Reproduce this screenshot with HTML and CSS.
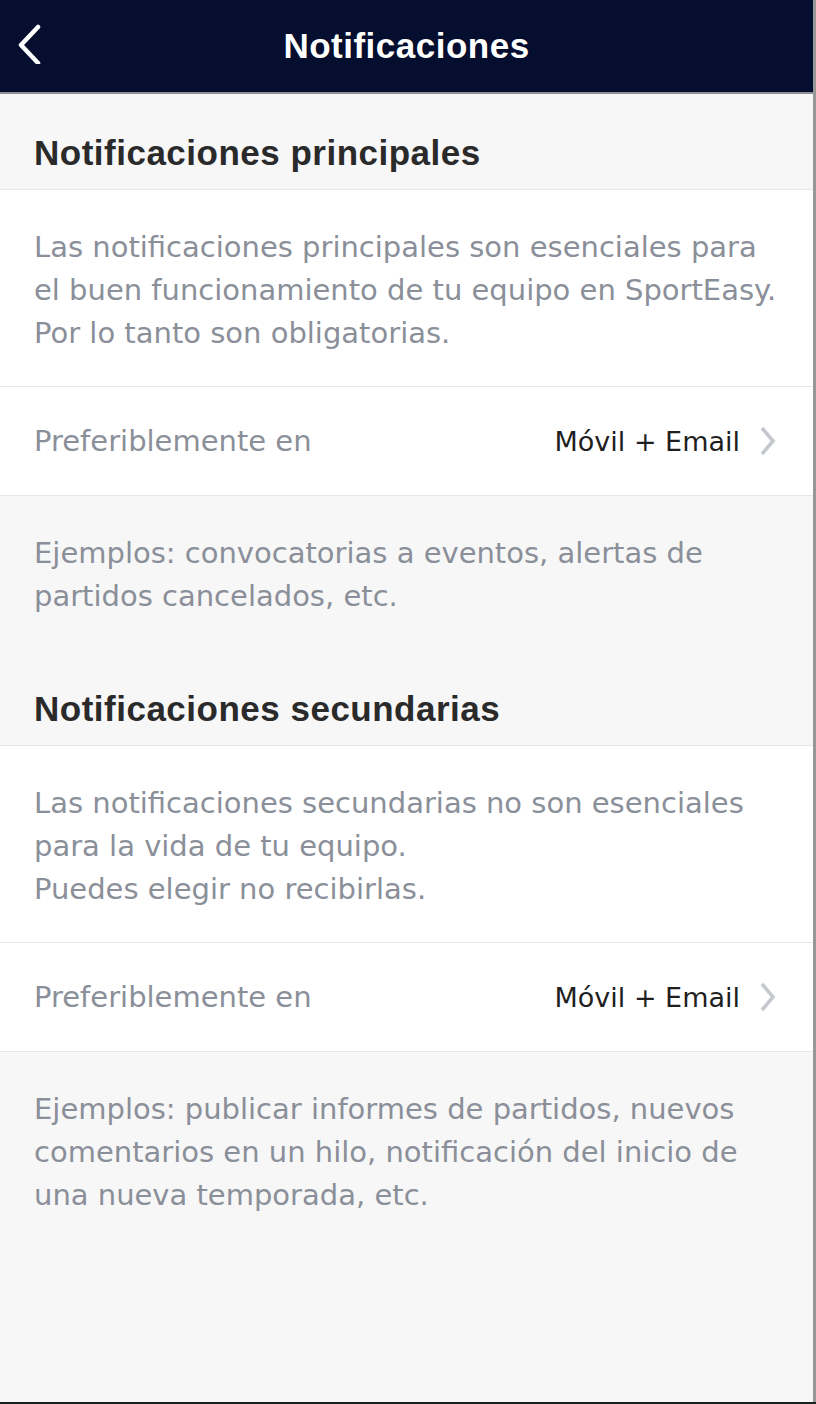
FILE: index.html
```html
<!DOCTYPE html>
<html>

<head>
  <title>Notificaciones</title>
  <link rel="stylesheet" href="styles.css">
</head>

<body>

  <div class="screen">
    <div class="topbar">
      <a class="back" href="#">
        <svg width="30" height="44" viewBox="0 0 30 44">
          <path d="M22 7 L5 25 L22 43" fill="none" stroke="#fff" stroke-width="4.5" stroke-linecap="round" stroke-linejoin="round"/>
        </svg>
      </a>
      <h1 class="title">Notificaciones</h1>
    </div>

    <h2 class="section-title">Notificaciones principales</h2>
    <p class="description">Las notificaciones principales son esenciales para<br>el buen funcionamiento de tu equipo en SportEasy.<br>Por lo tanto son obligatorias.</p>
    <div class="row">
      <span class="row-label">Preferiblemente en</span>
      <span class="row-value">Móvil + Email
        <svg class="chevron" width="16" height="30" viewBox="0 0 16 30">
          <path d="M2 2 L13 15 L2 28" fill="none" stroke="#c5c8ce" stroke-width="3.6"/>
        </svg>
      </span>
    </div>
    <p class="examples">Ejemplos: convocatorias a eventos, alertas de<br>partidos cancelados, etc.</p>

    <h2 class="section-title">Notificaciones secundarias</h2>
    <p class="description">Las notificaciones secundarias no son esenciales<br>para la vida de tu equipo.<br>Puedes elegir no recibirlas.</p>
    <div class="row">
      <span class="row-label">Preferiblemente en</span>
      <span class="row-value">Móvil + Email
        <svg class="chevron" width="16" height="30" viewBox="0 0 16 30">
          <path d="M2 2 L13 15 L2 28" fill="none" stroke="#c5c8ce" stroke-width="3.6"/>
        </svg>
      </span>
    </div>
    <p class="examples">Ejemplos: publicar informes de partidos, nuevos<br>comentarios en un hilo, notificación del inicio de<br>una nueva temporada, etc.</p>
  </div>
  <div class="floor"></div>

</body>

</html>
```

FILE: styles.css
```css
body {
  margin: 0;
  background-color: #979797;
}

.screen {
  width: 813px;
  height: 1402px;
  overflow: hidden;
  background-color: #f7f7f7;
  font-family: "DejaVu Sans", sans-serif;
}

.floor {
  height: 2px;
  background-color: #17211f;
}

.topbar {
  position: relative;
  height: 92px;
  background-color: #050e2e;
  border-bottom: 2px solid #8c8f96;
  display: flex;
  align-items: center;
  justify-content: center;
}

.back {
  position: absolute;
  left: 16px;
  top: 20px;
}

.title {
  margin: 0;
  color: white;
  font-family: "Liberation Sans", Arial, sans-serif;
  font-weight: bold;
  font-size: 35px;
  letter-spacing: 0.5px;
}

.section-title {
  margin: 0;
  padding: 37px 20px 15px 34px;
  font-family: "Liberation Sans", Arial, sans-serif;
  font-weight: bold;
  font-size: 35px;
  line-height: 43px;
  color: #2a2a2a;
  letter-spacing: 0.5px;
  border-bottom: 1px solid #e3e6ea;
}

.description {
  margin: 0;
  padding: 36px 10px 31px 34px;
  background-color: white;
  color: #8a8f99;
  font-size: 29px;
  line-height: 43px;
  white-space: nowrap;
  border-bottom: 1px solid #e3e6ea;
}

.row {
  height: 108px;
  padding: 0 37px 0 34px;
  background-color: white;
  display: flex;
  align-items: center;
  justify-content: space-between;
  border-bottom: 1px solid #e3e6ea;
}

.row-label {
  color: #8a8f99;
  font-size: 29px;
}

.row-value {
  color: #1f1f1f;
  font-size: 27px;
  display: flex;
  align-items: center;
  gap: 20px;
}

.examples {
  margin: 0;
  padding: 36px 10px 32px 34px;
  color: #8a8f99;
  font-size: 29px;
  line-height: 43px;
  white-space: nowrap;
}
```
